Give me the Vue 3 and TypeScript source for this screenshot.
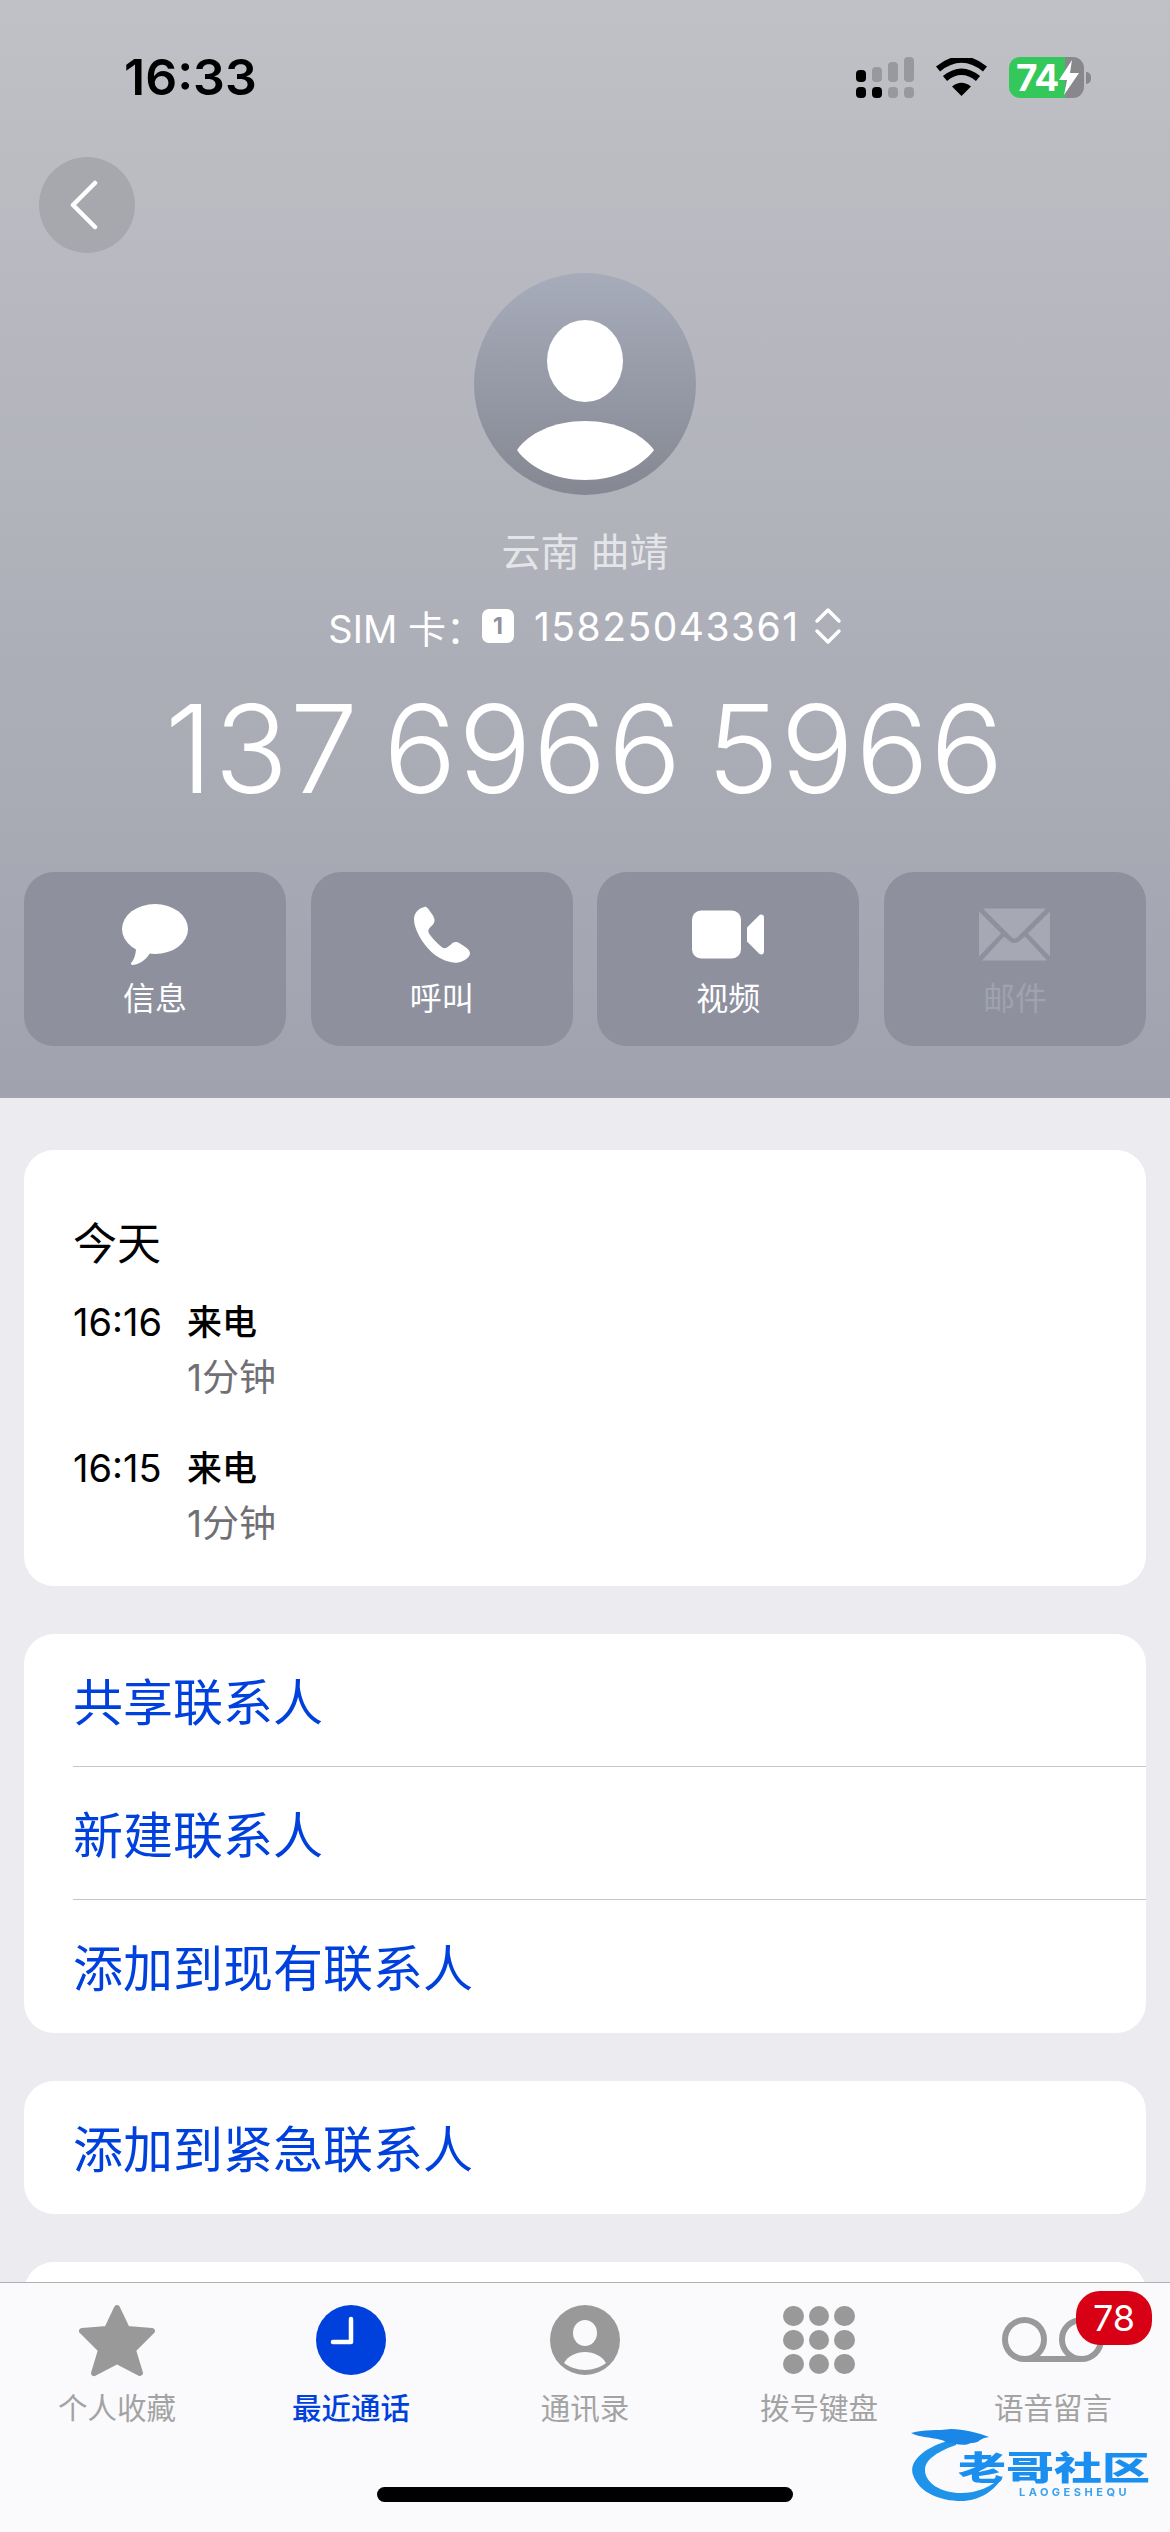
<template>
  <div class="phone">
    <header class="hero">
      <div class="status-bar">
        <span class="clock">16:33</span>
        <div class="status-icons">
          <svg class="signal" width="58" height="41" viewBox="0 0 58 41">
            <rect x="0" y="13" width="10" height="12" rx="4" fill="#000" />
            <rect x="16" y="10" width="10" height="15" rx="4" fill="#98999d" />
            <rect x="32" y="5" width="10" height="20" rx="4" fill="#98999d" />
            <rect x="48" y="0" width="10" height="25" rx="4" fill="#98999d" />
            <rect x="0" y="30" width="10" height="11" rx="4" fill="#000" />
            <rect x="16" y="30" width="10" height="11" rx="4" fill="#000" />
            <rect x="32" y="30" width="10" height="11" rx="4" fill="#98999d" />
            <rect x="48" y="30" width="10" height="11" rx="4" fill="#98999d" />
          </svg>
          <svg class="wifi" width="51" height="38" viewBox="0 0 51 38">
            <path d="M25.500 38 L16 28.500 Q25.500 21 35 28.500 Z" fill="#000" />
            <path d="M9 20.500 Q25.500 7 42 20.500" fill="none" stroke="#000" stroke-width="6.500" />
            <path d="M2 11 Q25.500 -8 49 11" fill="none" stroke="#000" stroke-width="6.500" />
          </svg>
          <div class="battery">
            <span>74</span>
            <svg width="20" height="35" viewBox="0 0 20 35">
              <path d="M13 0 L0 20 H8 L5 35 L20 13 H11 Z" fill="#fff" />
            </svg>
          </div>
        </div>
      </div>

      <div class="back">
        <svg width="30" height="50" viewBox="0 0 30 50">
          <path d="M26 3 L4 25 L26 47" fill="none" stroke="#fff" stroke-width="4.500" stroke-linecap="round" stroke-linejoin="round" />
        </svg>
      </div>

      <div class="avatar">
        <svg width="222" height="222" viewBox="0 0 222 222">
          <ellipse cx="111" cy="88" rx="38" ry="41" fill="#fff" />
          <path d="M43 177 C55 160 80 148 111 148 C142 148 167 160 180 177 C167 194 142 207 111 207 C80 207 55 194 43 177Z" fill="#fff" />
        </svg>
      </div>

      <div class="location">云南 曲靖</div>
      <div class="sim-row">
        <span>SIM 卡：</span>
        <span class="sim-badge">1</span>
        <span class="sim-number">15825043361</span>
        <svg width="28" height="38" viewBox="0 0 28 38">
          <path d="M3 14 L14 3 L25 14 M3 24 L14 35 L25 24" fill="none" stroke="#fff" stroke-width="3.500" stroke-linecap="round" stroke-linejoin="round" />
        </svg>
      </div>
      <div class="number">137 6966 5966</div>

      <div class="actions">
        <div class="action">
          <svg width="66" height="61" viewBox="0 0 66 61">
            <ellipse cx="33" cy="25" rx="33" ry="25" fill="#fff" />
            <path d="M14 44 C14 50 12 56 9 59 C9 61 10 61 11 61 C18 60 24 56 28 49Z" fill="#fff" />
          </svg>
          <span>信息</span>
        </div>
        <div class="action">
          <svg width="56" height="56" viewBox="0 0 56 56">
            <path d="M9 1 C5 2 0 6 0 13 C0 22 8 37 18 46 C27 54 38 57 44 56 C51 55 56 50 56 47 C56 44 54 42 46 37 C42 35 40 35 37 38 L33 41 C31 42 29 42 27 40 C22 36 18 31 15 27 C14 25 14 23 16 21 L19 18 C21 15 21 13 19 9 L14 2 C12 0 11 0 9 1Z" fill="#fff" />
          </svg>
          <span>呼叫</span>
        </div>
        <div class="action">
          <svg width="72" height="48" viewBox="0 0 72 48">
            <rect width="49" height="48" rx="9" fill="#fff" />
            <path d="M55 17 L67 5 C69 3 72 4 72 7 V41 C72 44 69 45 67 43 L55 31 Z" fill="#fff" />
          </svg>
          <span>视频</span>
        </div>
        <div class="action disabled">
          <svg width="71" height="52" viewBox="0 0 71 52">
            <path d="M4 0 H67 L38 29 Q35.500 31 33 29Z" fill="#a6a8b4" />
            <path d="M0 3 L22 25 L0 48Z" fill="#a6a8b4" />
            <path d="M71 3 L49 25 L71 48Z" fill="#a6a8b4" />
            <path d="M3 52 L25 28 L31 33 Q35.500 36 40 33 L46 28 L68 52Z" fill="#a6a8b4" />
          </svg>
          <span>邮件</span>
        </div>
      </div>
    </header>

    <main class="content">
      <section class="card history">
        <div class="day">今天</div>
        <div v-for="call in calls" :key="call.time" class="call">
          <span class="call-time">{{ call.time }}</span>
          <div>
            <div class="call-type">{{ call.type }}</div>
            <div class="call-length">{{ call.length }}</div>
          </div>
        </div>
      </section>

      <section class="card">
        <div v-for="link in contactLinks" :key="link" class="link">{{ link }}</div>
      </section>

      <section class="card">
        <div class="link">添加到紧急联系人</div>
      </section>

      <section class="card peek"></section>
    </main>

    <nav class="tabbar">
      <div class="tabs">
        <div class="tab">
          <div class="tab-icon">
            <svg width="76" height="73" viewBox="0 0 76 73">
              <path d="M38 4 L48 25 L73 27 L54 46 L61 69 L38 57 L15 69 L22 46 L3 27 L28 25 Z" fill="#999" stroke="#999" stroke-width="6" stroke-linejoin="round" />
            </svg>
          </div>
          <span>个人收藏</span>
        </div>
        <div class="tab active">
          <div class="tab-icon">
            <svg width="70" height="70" viewBox="0 0 70 70">
              <circle cx="35" cy="35" r="35" fill="#0040dd" />
              <path d="M35 14 V37 H17" fill="none" stroke="#fff" stroke-width="4.500" stroke-linecap="round" stroke-linejoin="round" />
            </svg>
          </div>
          <span>最近通话</span>
        </div>
        <div class="tab">
          <div class="tab-icon">
            <svg width="70" height="70" viewBox="0 0 70 70">
              <circle cx="35" cy="35" r="35" fill="#999" />
              <ellipse cx="35" cy="28" rx="12" ry="13" fill="#fafafc" />
              <path d="M14 58 C18 51 26 47 35 47 C44 47 52 51 56 58 C51 62 43 65 35 65 C27 65 19 62 14 58Z" fill="#fafafc" />
            </svg>
          </div>
          <span>通讯录</span>
        </div>
        <div class="tab">
          <div class="tab-icon">
            <div class="keypad">
              <i v-for="n in 9" :key="n"></i>
            </div>
          </div>
          <span>拨号键盘</span>
        </div>
        <div class="tab">
          <div class="tab-icon">
            <svg width="102" height="46" viewBox="0 0 102 46">
              <circle cx="22.500" cy="22.500" r="19.500" fill="none" stroke="#999" stroke-width="6" />
              <circle cx="79.500" cy="22.500" r="19.500" fill="none" stroke="#999" stroke-width="6" />
              <path d="M22.500 42 H79.500" stroke="#999" stroke-width="6" />
            </svg>
            <span class="badge">78</span>
          </div>
          <span>语音留言</span>
        </div>
      </div>
      <div class="home-bar"></div>

      <div class="watermark">
        <svg width="100" height="78" viewBox="0 0 100 78">
          <path d="M45 16 C15 22 -3 38 2 52 C8 70 30 78 50 78 C68 78 84 68 92 53 C80 64 66 70 50 70 C30 70 14 60 14 47 C14 36 28 28 45 22Z" fill="#1f93ea" />
          <path d="M0 10 C14 6 26 8 40 6 C52 6 68 10 78 14 C66 16 70 20 60 20 C52 24 44 20 36 20 C30 14 12 16 0 10Z" fill="#1a86e6" />
        </svg>
        <strong class="mark-name">老哥社区</strong>
        <small class="mark-latin">LAOGESHEQU</small>
      </div>
    </nav>
  </div>
</template>

<script setup lang="ts">
interface Call {
  time: string
  type: string
  length: string
}

const calls: Call[] = [
  { time: '16:16', type: '来电', length: '1分钟' },
  { time: '16:15', type: '来电', length: '1分钟' }
]

const contactLinks: string[] = ['共享联系人', '新建联系人', '添加到现有联系人']
</script>

<style>
html,
body {
  margin: 0;
  background: #ebebf0;
}
</style>

<style scoped>
.phone {
  display: flex;
  flex-direction: column;
  width: 1170px;
  height: 2532px;
  overflow: hidden;
  background: #ebebf0;
  font-family: Inter, "Noto Sans CJK SC", sans-serif;
}

.hero {
  height: 1098px;
  flex: none;
  box-sizing: border-box;
  background: linear-gradient(180deg, #c0c1c6 0%, #a0a2ae 100%);
}

.status-bar {
  display: flex;
  justify-content: space-between;
  align-items: center;
  height: 157px;
  box-sizing: border-box;
  padding: 0 86px 3px 124px;
}

.clock {
  font-size: 50px;
  font-weight: 600;
  color: #000;
}

.status-icons {
  display: flex;
  align-items: center;
  gap: 22px;
}

.battery {
  position: relative;
  display: flex;
  align-items: center;
  gap: 1px;
  width: 75px;
  height: 41px;
  box-sizing: border-box;
  padding-left: 7px;
  border-radius: 11px;
  background: linear-gradient(90deg, #34c759 0 56px, #88888c 56px);
  color: #fff;
  font-size: 37px;
  font-weight: 700;
  letter-spacing: -1px;
}

.battery::after {
  content: "";
  position: absolute;
  right: -7px;
  top: 15px;
  width: 5px;
  height: 12px;
  border-radius: 0 6px 6px 0;
  background: #88888c;
}

.back {
  display: flex;
  align-items: center;
  justify-content: center;
  width: 96px;
  height: 96px;
  margin-left: 39px;
  padding-right: 6px;
  box-sizing: border-box;
  border-radius: 50%;
  background: #a7a8ad;
}

.avatar {
  width: 222px;
  height: 222px;
  margin: 20px auto 0;
  border-radius: 50%;
  background: linear-gradient(180deg, #a7acbb 0%, #858892 100%);
}

.avatar svg {
  display: block;
}

.location {
  margin-top: 29px;
  text-align: center;
  font-size: 39px;
  line-height: 56px;
  color: #e4e5e9;
}

.sim-row {
  display: flex;
  justify-content: center;
  align-items: center;
  height: 50px;
  margin-top: 21px;
  color: #fff;
  font-size: 38px;
}

.sim-badge {
  display: flex;
  align-items: center;
  justify-content: center;
  width: 32px;
  height: 34px;
  margin-left: -2px;
  border-radius: 7px;
  background: #fff;
  color: #8f919d;
  font-size: 23px;
  font-weight: 700;
}

.sim-number {
  margin: 0 14px 0 20px;
  font-size: 39px;
  letter-spacing: 1.500px;
}

.number {
  margin-top: 33px;
  text-align: center;
  font-size: 122px;
  font-weight: 350;
  line-height: 130px;
  letter-spacing: 1.500px;
  word-spacing: -12px;
  color: #fff;
}

.actions {
  display: grid;
  grid-template-columns: repeat(4, 262px);
  justify-content: space-between;
  margin-top: 58px;
  padding: 0 24px;
}

.action {
  display: flex;
  flex-direction: column;
  align-items: center;
  height: 174px;
  box-sizing: border-box;
  border-radius: 30px;
  background: #8e909e;
  color: #fff;
  font-size: 32px;
}

.action svg {
  height: 61px;
  margin-top: 32px;
}

.action span {
  margin-top: 12px;
  line-height: 44px;
}

.action.disabled {
  color: #a0a2ae;
}

.content {
  flex: 1;
  min-height: 0;
  overflow: hidden;
  display: flex;
  flex-direction: column;
  gap: 48px;
  padding: 52px 24px 0;
}

.card {
  flex: none;
  border-radius: 30px;
  background: #fff;
}

.peek {
  height: 132px;
}

.history {
  padding: 64px 49px 37px;
}

.day {
  font-size: 44px;
  line-height: 60px;
  color: #000;
  margin-bottom: 23px;
}

.call {
  display: flex;
  margin-bottom: 40px;
  font-size: 35px;
  line-height: 50px;
}

.call:last-child {
  margin-bottom: 0;
}

.call-time {
  width: 114px;
  flex: none;
  font-size: 38px;
  color: #000;
}

.call-type {
  font-weight: 500;
  color: #000;
  height: 56px;
}

.call-length {
  font-size: 37px;
  color: #6f6f74;
}

.link {
  height: 133px;
  margin-left: 49px;
  padding-right: 49px;
  box-sizing: border-box;
  line-height: 139px;
  font-size: 50px;
  color: #0040dd;
  border-bottom: 1px solid #c6c6c8;
}

.link:last-child {
  border-bottom: none;
}

.tabbar {
  position: relative;
  flex: none;
  height: 250px;
  box-sizing: border-box;
  border-top: 1.500px solid #b0b0b2;
  background: #fafafc;
}

.tabs {
  display: grid;
  grid-template-columns: repeat(5, 234px);
}

.tab {
  display: flex;
  flex-direction: column;
  align-items: center;
  color: #a3a3a3;
  font-size: 29.500px;
  line-height: 40px;
}

.tab.active {
  color: #0040dd;
  font-weight: 500;
}

.tab-icon {
  position: relative;
  display: flex;
  align-items: center;
  justify-content: center;
  height: 74px;
  margin-top: 20px;
  margin-bottom: 11px;
}

.keypad {
  display: grid;
  grid-template-columns: repeat(3, 20.500px);
  gap: 3.500px 5px;
}

.keypad i {
  display: block;
  height: 20.500px;
  border-radius: 50%;
  background: #999;
}

.badge {
  position: absolute;
  left: 74px;
  top: -12px;
  width: 76px;
  height: 54px;
  border-radius: 24px;
  background: #d70015;
  color: #fff;
  font-size: 36px;
  font-weight: 400;
  line-height: 54px;
  text-align: center;
}

.home-bar {
  width: 416px;
  height: 15px;
  margin: 59px auto 0;
  border-radius: 8px;
  background: #000;
}

.watermark {
  position: absolute;
  left: 911px;
  top: 140px;
  width: 239px;
  height: 78px;
  filter: blur(0.6px);
}

.watermark svg {
  position: absolute;
  left: 0;
  top: 0;
}

.mark-name {
  position: absolute;
  right: 0;
  top: 30px;
  font-size: 48px;
  font-weight: 900;
  line-height: 30px;
  color: #1a8ff0;
  white-space: nowrap;
  transform: scaleY(0.68);
}

.mark-latin {
  position: absolute;
  right: 20px;
  top: 63px;
  font-size: 11px;
  font-weight: 700;
  letter-spacing: 3.500px;
  line-height: 12px;
  color: #3ba2ee;
}
</style>
